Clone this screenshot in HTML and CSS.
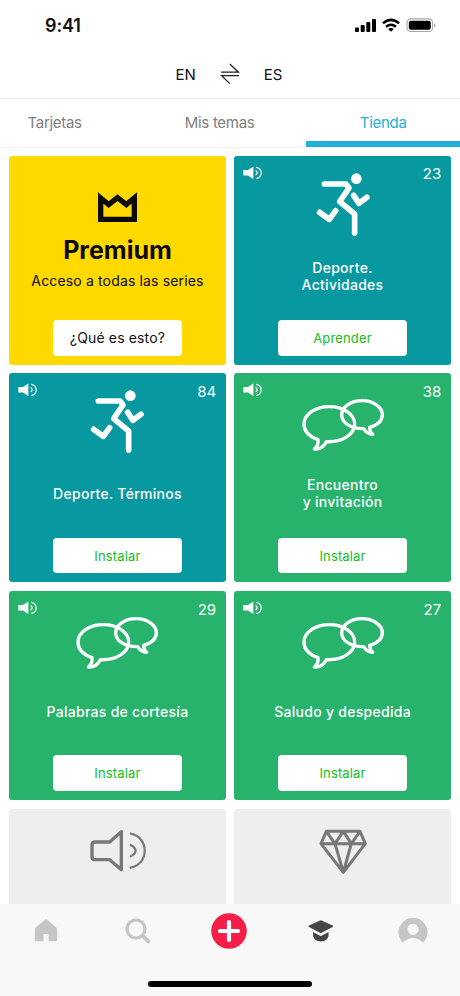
FILE: index.html
```html
<!DOCTYPE html>
<html lang="es">
<head>
  <meta charset="UTF-8">
  <meta name="viewport" content="width=device-width, initial-scale=1">
  <title>Tienda</title>
  <link rel="stylesheet" href="styles.css">
</head>
<body>
  <!-- shared icons -->
  <svg class="sprite" width="0" height="0">
    <symbol id="icon-sound" viewBox="0 0 57 40">
      <path fill="currentColor" d="M1 12h14L31 1v38L15 28H1z"/>
      <path fill="none" stroke="currentColor" stroke-width="3.5" stroke-linecap="round" d="M39 14q7 6 0 12M41 4c18 5 18 28 0 33"/>
    </symbol>
    <symbol id="icon-runner" viewBox="0 0 300 252">
      <circle cx="190" cy="68" r="16" fill="currentColor"/>
      <path fill="none" stroke="currentColor" stroke-width="17" stroke-linecap="round" stroke-linejoin="round" d="M94 84h65l9 12-28 41 45 37v57M182 118l16 24 24-18M80 169l29 21 19-26"/>
    </symbol>
    <symbol id="icon-chat" viewBox="0 0 300 252">
      <g fill="none" stroke="currentColor" stroke-width="10" stroke-linejoin="round">
        <path d="M100 206c47 2 85-21 85-53 0-29-34-52-76-52s-76 23-76 52c0 21 16 38 42 47 2 11-1 20-11 28 18 1 29-8 36-22z"/>
        <path d="M212 167c-37 1-66-17-66-42 0-23 27-42 61-42s61 19 61 42c0 17-14 31-38 38 0 9 3 16 9 21-13 0-21-7-27-17z"/>
      </g>
    </symbol>
  </svg>

  <div class="app">
    <header class="status-bar">
      <span class="time">9:41</span>
      <svg class="status-icons" width="82" height="16" viewBox="0 0 82 16">
        <rect x="0" y="9.5" width="4" height="4.5" rx="1"/>
        <rect x="5.7" y="7" width="4" height="7" rx="1"/>
        <rect x="11.3" y="4" width="4" height="10" rx="1"/>
        <rect x="17" y="1" width="4" height="13" rx="1"/>
        <path fill="none" stroke="#000" stroke-width="2.5" d="M27.9 5.3q8.1-6.9 16.2 0M31 8.8q5-4.2 10 0"/>
        <path d="M33.1 11q2.9-2.1 5.8 0L36 13.8z"/>
        <rect x="52" y=".9" width="25.6" height="12.6" rx="3.8" fill="none" stroke="#a6a6a6" stroke-width="1.1"/>
        <rect x="53.8" y="2.7" width="22" height="9" rx="2.2"/>
        <path fill="#a6a6a6" d="M79 5v4.5q3-2.2 0-4.5z"/>
      </svg>
    </header>

    <div class="languages">
      <span>EN</span>
      <svg width="20" height="22" viewBox="0 0 20 22" fill="none" stroke="#222" stroke-width="1.3">
        <path d="M1 9.200h17.400L9.800 1M19 12.600H1.600l8.200 8"/>
      </svg>
      <span>ES</span>
    </div>

    <nav class="tabs">
      <div class="tabs-left">
        <span class="tab">Tarjetas</span>
        <span class="tab">Mis temas</span>
      </div>
      <span class="tab active">Tienda</span>
    </nav>

    <main class="store">
      <section class="card premium">
        <svg class="card-icon" viewBox="0 0 300 228">
          <path fill="none" stroke="#0b0900" stroke-width="16" d="M101 126l24 20 26.500-21 26.500 21 24-20v64H101z"/>
        </svg>
        <h2>Premium</h2>
        <p>Acceso a todas las series</p>
        <button>¿Qué es esto?</button>
      </section>

      <section class="card sport">
        <svg class="sound"><use href="#icon-sound"/></svg>
        <span class="count">23</span>
        <svg class="card-icon"><use href="#icon-runner"/></svg>
        <h3>Deporte.<br>Actividades</h3>
        <button>Aprender</button>
      </section>

      <section class="card sport">
        <svg class="sound"><use href="#icon-sound"/></svg>
        <span class="count">84</span>
        <svg class="card-icon"><use href="#icon-runner"/></svg>
        <h3>Deporte. Términos</h3>
        <button>Instalar</button>
      </section>

      <section class="card talk">
        <svg class="sound"><use href="#icon-sound"/></svg>
        <span class="count">38</span>
        <svg class="card-icon"><use href="#icon-chat"/></svg>
        <h3>Encuentro<br>y invitación</h3>
        <button>Instalar</button>
      </section>

      <section class="card talk">
        <svg class="sound"><use href="#icon-sound"/></svg>
        <span class="count">29</span>
        <svg class="card-icon"><use href="#icon-chat"/></svg>
        <h3>Palabras de cortesía</h3>
        <button>Instalar</button>
      </section>

      <section class="card talk">
        <svg class="sound"><use href="#icon-sound"/></svg>
        <span class="count">27</span>
        <svg class="card-icon"><use href="#icon-chat"/></svg>
        <h3>Saludo y despedida</h3>
        <button>Instalar</button>
      </section>

      <section class="card plain">
        <svg class="card-icon" viewBox="0 0 300 252" fill="none" stroke="currentColor" stroke-linecap="round" stroke-linejoin="round">
          <path stroke-width="10" d="M128 99l35-31v114l-35-30H84q-9 0-9-9v-35q0-9 9-9z"/>
          <path stroke-width="6.5" d="M191 108q30 17 0 34M191 74c56 11 56 91 0 102"/>
        </svg>
      </section>

      <section class="card plain">
        <svg class="card-icon" viewBox="0 0 300 252" fill="none" stroke="currentColor" stroke-width="9" stroke-linejoin="round">
          <path d="M100 67h101l16 37-66 86-67-86zM84 104h133M100 67l26 37 25-37 24 37 26-37M126 104l25 86 24-86"/>
        </svg>
      </section>
    </main>

    <footer class="bottom">
      <nav class="bottom-nav">
        <svg width="24" height="24" viewBox="0 0 24 24">
          <path fill="#c6c6c6" d="M12 .3q.6 0 1.1.5l9.400 8q.7.6.7 1.400V21q0 1.300-1.300 1.300h-7.300V16q0-1-1-1h-3q-1 0-1 1v6.300H2.100Q.8 22.300.8 21V10.200q0-.8.7-1.400l9.400-8q.5-.5 1.100-.5z"/>
        </svg>
        <svg width="26" height="26" viewBox="0 0 26 26" fill="none" stroke="#c6c6c6">
          <circle cx="11" cy="11" r="9" stroke-width="3.2"/>
          <path stroke-width="4" stroke-linecap="round" d="M18.500 18.500l4.800 4.800"/>
        </svg>
        <svg width="36" height="36" viewBox="0 0 36 36">
          <circle cx="18" cy="18" r="17.8" fill="#f51e48"/>
          <path stroke="#fff" stroke-width="4.2" stroke-linecap="round" d="M18 9v18M9 18h18"/>
        </svg>
        <svg width="26" height="24" viewBox="0 0 26 24" fill="#454545">
          <path d="M12 1.500q.8-.4 1.600 0l11 5q1.200.7 0 1.400l-11 5.800q-.8.4-1.600 0L1 7.900q-1.200-.7 0-1.400z"/>
          <path d="M5 13l6.600 3.600q1.200.6 2.400 0l6.600-3.600q1 9.400-7.800 9.400T5 13z"/>
        </svg>
        <svg width="30" height="30" viewBox="0 0 30 30">
          <path fill="#c6c6c6" fill-rule="evenodd" d="M5 26.800A14.500 14.500 0 1 1 25 26.800Q21 22 15 22T5 26.800zM15 7.700a5.600 5.600 0 1 0 0 11.200 5.600 5.600 0 0 0 0-11.200z"/>
        </svg>
      </nav>
      <div class="home-indicator"></div>
    </footer>
  </div>
</body>
</html>
```

FILE: styles.css
```css
* {
  box-sizing: border-box;
}

body {
  margin: 0;
  background-color: #fff;
  font-family: Inter, 'Liberation Sans', sans-serif;
  color: #111;
}

svg {
  display: block;
}

.sprite {
  position: absolute;
}

.app {
  width: 460px;
  height: 996px;
  display: flex;
  flex-direction: column;
  overflow: hidden;
}

.status-bar {
  height: 50px;
  flex-shrink: 0;
  display: flex;
  justify-content: space-between;
  align-items: center;
  padding: 1px 23px 0 45px;
}

.time {
  font-size: 18px;
  font-weight: 600;
  letter-spacing: -0.1px;
}

.languages {
  height: 49px;
  flex-shrink: 0;
  display: flex;
  justify-content: center;
  align-items: center;
  gap: 24px;
  padding-right: 2px;
  border-bottom: 1px solid #e4e4e4;
  font-size: 15px;
}

.tabs {
  height: 49px;
  flex-shrink: 0;
  display: flex;
  border-bottom: 1px solid #f1f1f1;
}

.tabs-left {
  width: 306.4px;
  display: flex;
  justify-content: space-between;
  padding: 0 52px 0 27.5px;
}

.tab {
  font-size: 15px;
  line-height: 48px;
  letter-spacing: -0.3px;
  color: #808080;
}

.tab.active {
  flex: 1;
  text-align: center;
  color: #21b0da;
  border-bottom: 6px solid #21b0da;
}

.store {
  flex: 1;
  min-height: 0;
  overflow: hidden;
  display: grid;
  grid-template-columns: 1fr 1fr;
  grid-auto-rows: 209px;
  align-content: start;
  gap: 8.7px;
  padding: 7.8px 9.3px 0;
}

.card {
  position: relative;
  display: flex;
  flex-direction: column;
  align-items: center;
  padding-bottom: 9px;
  border-radius: 3px;
  color: #fff;
}

.card-icon {
  width: 100px;
  height: 84px;
  flex-shrink: 0;
}

.card h3 {
  height: 72px;
  margin: 0;
  display: flex;
  align-items: center;
  text-align: center;
  font-size: 14px;
  font-weight: 500;
  line-height: 17px;
  letter-spacing: 0.28px;
}

.card button {
  width: 129px;
  height: 35.7px;
  margin-top: auto;
  padding: 0;
  border: none;
  border-radius: 4px;
  background-color: #fff;
  font-family: inherit;
  font-size: 13px;
  letter-spacing: 0.15px;
  color: #16bd1b;
}

/* corner marks over the card */
.sound {
  position: absolute;
  top: 10px;
  left: 8.7px;
  width: 19px;
  height: 13.5px;
}

.count {
  position: absolute;
  top: 9.5px;
  right: 9.5px;
  font-size: 15px;
  line-height: 18px;
}

.sport {
  background-color: #07999f;
}

.talk {
  background-color: #27b36c;
}

.plain {
  background-color: #eee;
  color: #777;
}

.premium {
  background-color: #ffd900;
  color: #0b0900;
}

.premium .card-icon {
  height: 76px;
}

.premium h2 {
  margin: 0;
  font-size: 25px;
  line-height: 37px;
}

.premium p {
  margin: 0;
  font-size: 14px;
  line-height: 24px;
  letter-spacing: 0.15px;
}

.premium button {
  font-size: 14px;
  color: #111;
}

.bottom {
  height: 92px;
  flex-shrink: 0;
  background-color: #f8f8f8;
}

.bottom-nav {
  height: 54px;
  display: grid;
  grid-template-columns: repeat(5, 1fr);
  align-items: center;
  justify-items: center;
  padding-right: 1px;
}

.home-indicator {
  width: 164px;
  height: 6px;
  margin: 23px auto 0;
  border-radius: 3px;
  background-color: #000;
}
```
